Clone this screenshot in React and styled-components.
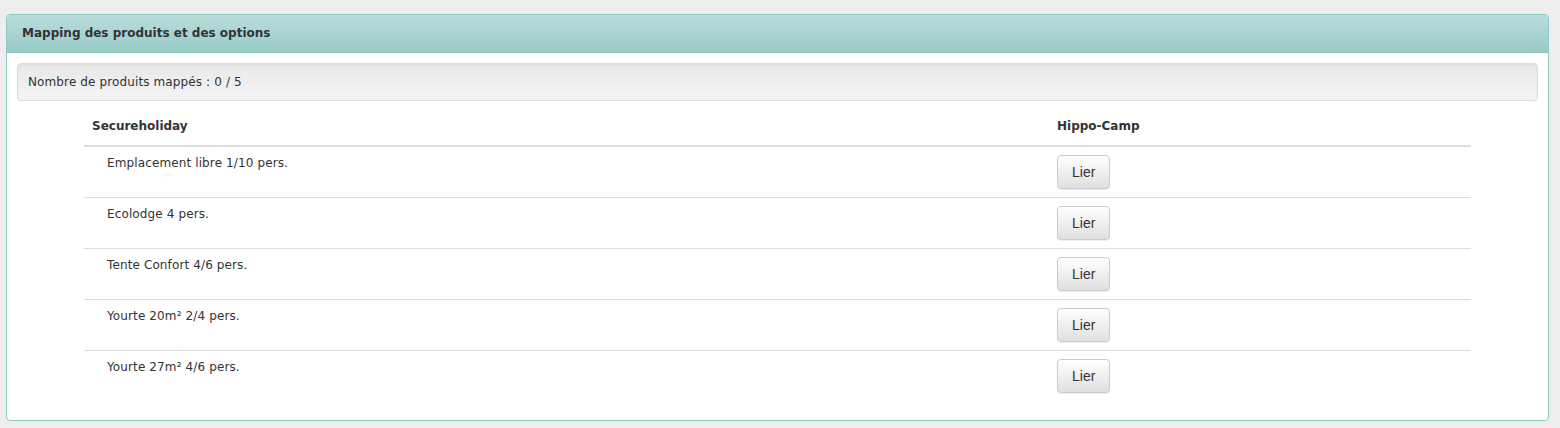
import React from "react";
import styled, { createGlobalStyle } from "styled-components";

const products = [
  "Emplacement libre 1/10 pers.",
  "Ecolodge 4 pers.",
  "Tente Confort 4/6 pers.",
  "Yourte 20m² 2/4 pers.",
  "Yourte 27m² 4/6 pers.",
];

function App() {
  return (
    <>
      <GlobalStyle />
      <Page>
        <Panel>
          <PanelHeading>Mapping des produits et des options</PanelHeading>
          <PanelBody>
            <Well>Nombre de produits mappés : 0 / {products.length}</Well>
            <Table>
              <thead>
                <tr>
                  <Th>Secureholiday</Th>
                  <Th>Hippo-Camp</Th>
                </tr>
              </thead>
              <tbody>
                {products.map((p) => (
                  <tr key={p}>
                    <Td>
                      <ProductName>{p}</ProductName>
                    </Td>
                    <Td>
                      <Button>Lier</Button>
                    </Td>
                  </tr>
                ))}
              </tbody>
            </Table>
          </PanelBody>
        </Panel>
      </Page>
    </>
  );
}

const GlobalStyle = createGlobalStyle`
  html, body {
    margin: 0;
    padding: 0;
    background: #eeeeee;
  }
  body {
    font-family: "DejaVu Sans", Verdana, sans-serif;
    font-size: 12px;
    line-height: 17px;
    color: #333333;
  }
`;

const Page = styled.div`
  padding: 14px 11px 0 6px;
`;

const Panel = styled.div`
  background: #ffffff;
  border: 1px solid #8fc7c3;
  border-radius: 4px;
  overflow: hidden;
`;

const PanelHeading = styled.div`
  height: 38px;
  box-sizing: border-box;
  display: flex;
  align-items: center;
  padding: 0 15px;
  font-weight: bold;
  color: #333333;
  background: linear-gradient(to bottom, #b9dedc 0%, #98cac7 100%);
  border-bottom: 1px solid #8fc7c3;
`;

const PanelBody = styled.div`
  padding: 10px 10px 19px;
`;

const Well = styled.div`
  height: 38px;
  box-sizing: border-box;
  display: flex;
  align-items: center;
  padding: 0 10px;
  letter-spacing: 0.12px;
  background: linear-gradient(to bottom, #e8e8e8 0%, #f5f5f5 100%);
  border: 1px solid #dcdcdc;
  border-radius: 4px;
  box-shadow: inset 0 1px 3px rgba(0, 0, 0, 0.05);
  margin-bottom: 9px;
`;

const Table = styled.table`
  width: 1387px;
  margin: 0 auto;
  border-collapse: collapse;
  border-spacing: 0;
`;

const Th = styled.th`
  text-align: left;
  font-weight: bold;
  padding: 8px 8px 10px;
  border-bottom: 2px solid #dddddd;
  &:first-child {
    width: 949px;
  }
`;

const Td = styled.td`
  padding: 8px;
  vertical-align: top;
  letter-spacing: 0.12px;
  border-top: 1px solid #dddddd;
  tr:first-child > & {
    border-top: none;
  }
`;

const ProductName = styled.div`
  padding-left: 15px;
`;

const Button = styled.button`
  display: inline-block;
  height: 34px;
  padding: 6px 14px;
  box-sizing: border-box;
  font-family: "Liberation Sans", Arial, sans-serif;
  font-size: 14px;
  line-height: 20px;
  color: #333333;
  background: linear-gradient(to bottom, #ffffff 0%, #e0e0e0 100%);
  border: 1px solid #cccccc;
  border-radius: 4px;
  box-shadow: inset 0 1px 0 rgba(255, 255, 255, 0.15), 0 1px 1px rgba(0, 0, 0, 0.075);
  cursor: pointer;
`;

export default App;
